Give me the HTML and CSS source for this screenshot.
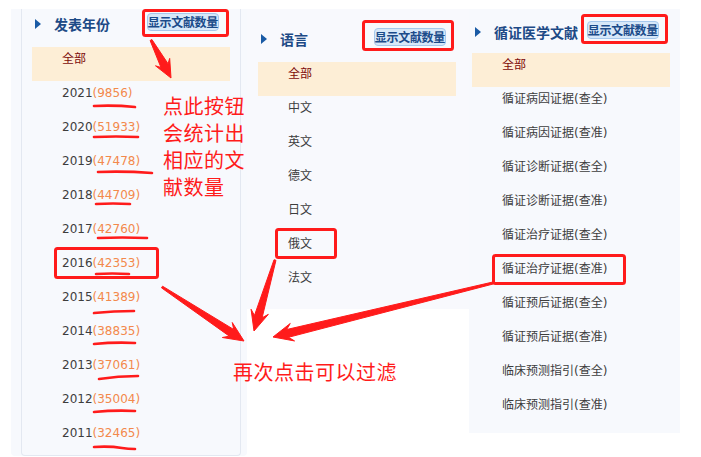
FILE: index.html
```html
<!DOCTYPE html>
<html lang="zh-CN">
<head>
  <meta charset="UTF-8">
  <meta name="viewport" content="width=device-width, initial-scale=1.0">
  <title>分组筛选</title>
  <link rel="stylesheet" href="styles.css">
</head>
<body>
  <div class="page">
    <section class="panel panel-year">
      <div class="panel-box">
        <div class="panel-head">
          <div class="head-title"><span class="tri"></span><h3>发表年份</h3></div>
          <button type="button" class="btn-count">显示文献数量</button>
        </div>
        <ul class="filter-list">
          <li class="active">全部</li>
          <li>2021<span class="num">(9856)</span></li>
          <li>2020<span class="num">(51933)</span></li>
          <li>2019<span class="num">(47478)</span></li>
          <li>2018<span class="num">(44709)</span></li>
          <li>2017<span class="num">(42760)</span></li>
          <li>2016<span class="num">(42353)</span></li>
          <li>2015<span class="num">(41389)</span></li>
          <li>2014<span class="num">(38835)</span></li>
          <li>2013<span class="num">(37061)</span></li>
          <li>2012<span class="num">(35004)</span></li>
          <li>2011<span class="num">(32465)</span></li>
        </ul>
      </div>
    </section>

    <section class="panel panel-lang">
      <div class="panel-head">
        <div class="head-title"><span class="tri"></span><h3>语言</h3></div>
        <button type="button" class="btn-count">显示文献数量</button>
      </div>
      <ul class="filter-list">
        <li class="active">全部</li>
        <li>中文</li>
        <li>英文</li>
        <li>德文</li>
        <li>日文</li>
        <li>俄文</li>
        <li>法文</li>
      </ul>
    </section>

    <section class="panel panel-ebm">
      <div class="panel-head">
        <div class="head-title"><span class="tri"></span><h3>循证医学文献</h3></div>
        <button type="button" class="btn-count">显示文献数量</button>
      </div>
      <ul class="filter-list">
        <li class="active">全部</li>
        <li>循证病因证据(查全)</li>
        <li>循证病因证据(查准)</li>
        <li>循证诊断证据(查全)</li>
        <li>循证诊断证据(查准)</li>
        <li>循证治疗证据(查全)</li>
        <li>循证治疗证据(查准)</li>
        <li>循证预后证据(查全)</li>
        <li>循证预后证据(查准)</li>
        <li>临床预测指引(查全)</li>
        <li>临床预测指引(查准)</li>
      </ul>
    </section>
  </div>

  <!-- screenshot annotations -->
  <svg class="marks" width="701" height="457" viewBox="0 0 701 457">
    <g class="boxes">
      <rect x="143.5" y="10.5" width="84" height="25" rx="2"/>
      <rect x="363.5" y="21.5" width="89" height="28" rx="2"/>
      <rect x="582.5" y="15.5" width="84" height="27" rx="2"/>
      <rect x="55.5" y="248.5" width="102" height="29" rx="2"/>
      <rect x="276.5" y="229.5" width="59" height="28" rx="2"/>
      <rect x="493.5" y="255.5" width="131" height="28" rx="2"/>
    </g>
    <g class="lines">
      <path d="M94 106 Q115 105 135 107"/>
      <path d="M94 137 Q116 136 138 137"/>
      <path d="M98 172 Q125 171 152 173"/>
      <path d="M96 204 Q113 203 130 204"/>
      <path d="M98 238 Q122 237 147 238"/>
      <path d="M96 274 Q112 273 129 274"/>
      <path d="M94 313 Q114 311 134 311"/>
      <path d="M94 344 Q115 342 135 343"/>
      <path d="M99 379 Q118 376 138 376"/>
      <path d="M94 412 Q115 410 135 411"/>
      <path d="M94 447 Q110 446 122 448 Q128 449 135 449"/>
    </g>
    <g class="arrows">
      <polygon points="150.1,40.5 160.96,67.46 155.5,65.8 171,78 169.7,58.4 168.04,63.74 151.9,39.5"/>
      <polygon points="161.45,287.8 229.3,336.14 222.35,337.5 244,341 232.25,322.5 233.7,329.46 162.55,286.2"/>
      <polygon points="274.04,259.72 254.46,315.46 251.07,309.24 254,331 268.33,314.36 262.14,317.74 275.96,260.28"/>
      <polygon points="492.76,282.03 286.65,329.52 290.26,323.46 273,337 294.54,340.94 288.55,337.28 493.24,283.97"/>
    </g>
  </svg>

  <div class="note note-count">点此按钮<br>会统计出<br>相应的文<br>献数量</div>
  <div class="note note-filter">再次点击可以过滤</div>
</body>
</html>
```

FILE: styles.css
```css
body {
  margin: 0;
  font-family: "DejaVu Sans", "Noto Sans CJK SC", sans-serif;
  background: #fff;
  position: relative;
  width: 701px;
  height: 457px;
  overflow: hidden;
}

.page {
  display: flex;
  align-items: flex-start;
  padding: 9px 0 0 11px;
}

.panel {
  background: #f7f9fd;
  box-sizing: border-box;
}

.panel-year {
  width: 236px;
  height: 447px;
  padding: 0 6px 0 10px;
  border-radius: 0 0 4px 4px;
}

.panel-box {
  height: 100%;
  box-sizing: border-box;
  border: 1px solid #e3e8f1;
  border-top: none;
  border-radius: 0 0 4px 4px;
}

.panel-lang {
  width: 222px;
  height: 300px;
  padding-top: 15px;
  background: #f8f9fd;
}

.panel-ebm {
  width: 211px;
  height: 424px;
  padding-top: 8px;
}

.panel-head {
  display: flex;
  align-items: center;
  justify-content: space-between;
  height: 30px;
  margin-bottom: 8px;
  padding: 0 21px 0 13px;
}

.panel-lang .panel-head {
  padding: 0 23px 0 14px;
}

.panel-ebm .panel-head {
  padding: 0 21px 0 6px;
  margin-bottom: 6px;
}

.head-title {
  display: flex;
  align-items: center;
  gap: 13px;
}

.tri {
  width: 0;
  height: 0;
  border-top: 5px solid transparent;
  border-bottom: 5px solid transparent;
  border-left: 6px solid #1a5ba5;
}

.panel-head h3 {
  margin: 0;
  font-family: "Noto Sans CJK SC", sans-serif;
  font-size: 14px;
  font-weight: 700;
  color: #1d4a86;
  line-height: 20px;
}

.btn-count {
  margin: 0 0 4px;
  padding: 0;
  height: 18px;
  border: 1px solid #a6c8ec;
  border-radius: 4px;
  background: #d7e8f9;
  font-family: "Noto Sans CJK SC", sans-serif;
  font-size: 12px;
  font-weight: 700;
  letter-spacing: -0.3px;
  line-height: 16px;
  color: #1b4b8a;
  cursor: pointer;
}

.filter-list {
  list-style: none;
  margin: 0 10px;
  padding: 0;
}

.panel-lang .filter-list {
  margin: 0 13px 0 11px;
}

.panel-ebm .filter-list {
  margin: 0 10px 0 3px;
}

.filter-list li {
  height: 34px;
  box-sizing: border-box;
  padding: 1px 0 0 30px;
  font-size: 12px;
  line-height: 22px;
  color: #3d3d3d;
  white-space: nowrap;
}

.filter-list li.active {
  background: #fdeed6;
  color: #7d0a0a;
}

.num {
  color: #f3894c;
}

.marks {
  position: absolute;
  left: 0;
  top: 0;
  pointer-events: none;
}

.boxes rect {
  fill: none;
  stroke: #ff1b1b;
  stroke-width: 3;
}

.lines path {
  fill: none;
  stroke: #ff1b1b;
  stroke-width: 2.6;
  stroke-linecap: round;
}

.arrows polygon {
  fill: #ff1b1b;
  stroke: #ff1b1b;
  stroke-width: 1;
  stroke-linejoin: round;
}

.note {
  position: absolute;
  font-family: "Noto Sans CJK SC", sans-serif;
  font-size: 20px;
  color: #ff1b1b;
  letter-spacing: 0.5px;
  white-space: nowrap;
}

.note-count {
  left: 163px;
  top: 92px;
  line-height: 27px;
}

.note-filter {
  left: 233px;
  top: 358px;
  line-height: 28px;
}
```
